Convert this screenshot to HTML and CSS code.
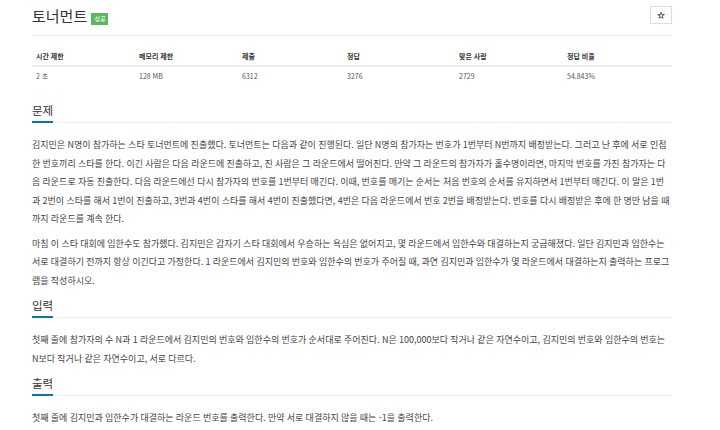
FILE: index.html
```html
<!DOCTYPE html>
<html lang="ko">
<head>
    <meta charset="UTF-8">
    <meta name="viewport" content="width=device-width, initial-scale=1.0">
    <title>토너먼트</title>
    <link rel="stylesheet" href="styles.css">
</head>
<body>
    <div class="page">
        <div class="page-header">
            <h1 class="title">토너먼트 <span class="badge">성공</span></h1>
            <button class="star-btn">&#9734;</button>
        </div>

        <table class="info">
            <thead>
                <tr>
                    <th class="c1">시간 제한</th>
                    <th class="c2">메모리 제한</th>
                    <th class="c3">제출</th>
                    <th class="c4">정답</th>
                    <th class="c5">맞은 사람</th>
                    <th>정답 비율</th>
                </tr>
            </thead>
            <tbody>
                <tr>
                    <td>2 초</td>
                    <td>128 MB</td>
                    <td>6312</td>
                    <td>3276</td>
                    <td>2729</td>
                    <td>54.843%</td>
                </tr>
            </tbody>
        </table>

        <section class="sec">
            <div class="headline"><h2>문제</h2></div>
            <p>김지민은 N명이 참가하는 스타 토너먼트에 진출했다. 토너먼트는 다음과 같이 진행된다. 일단 N명의 참가자는 번호가 1번부터 N번까지 배정받는다. 그러고 난 후에 서로 인접한 번호끼리 스타를 한다. 이긴 사람은 다음 라운드에 진출하고, 진 사람은 그 라운드에서 떨어진다. 만약 그 라운드의 참가자가 홀수명이라면, 마지막 번호를 가진 참가자는 다음 라운드로 자동 진출한다. 다음 라운드에선 다시 참가자의 번호를 1번부터 매긴다. 이때, 번호를 매기는 순서는 처음 번호의 순서를 유지하면서 1번부터 매긴다. 이 말은 1번과 2번이 스타를 해서 1번이 진출하고, 3번과 4번이 스타를 해서 4번이 진출했다면, 4번은 다음 라운드에서 번호 2번을 배정받는다. 번호를 다시 배정받은 후에 한 명만 남을 때까지 라운드를 계속 한다.</p>
            <p>마침 이 스타 대회에 임한수도 참가했다. 김지민은 갑자기 스타 대회에서 우승하는 욕심은 없어지고, 몇 라운드에서 임한수와 대결하는지 궁금해졌다. 일단 김지민과 임한수는 서로 대결하기 전까지 항상 이긴다고 가정한다. 1 라운드에서 김지민의 번호와 임한수의 번호가 주어질 때, 과연 김지민과 임한수가 몇 라운드에서 대결하는지 출력하는 프로그램을 작성하시오.</p>
        </section>

        <section class="sec">
            <div class="headline"><h2>입력</h2></div>
            <p>첫째 줄에 참가자의 수 N과 1 라운드에서 김지민의 번호와 임한수의 번호가 순서대로 주어진다. N은 100,000보다 작거나 같은 자연수이고, 김지민의 번호와 임한수의 번호는 N보다 작거나 같은 자연수이고, 서로 다르다.</p>
        </section>

        <section class="sec">
            <div class="headline"><h2>출력</h2></div>
            <p>첫째 줄에 김지민과 임한수가 대결하는 라운드 번호를 출력한다. 만약 서로 대결하지 않을 때는 -1을 출력한다.</p>
        </section>
    </div>
</body>
</html>
```

FILE: styles.css
```css
*{
    padding: 0;
    margin: 0;
    box-sizing: border-box;
}
body{
    background-color: white;
    font-family: "Noto Sans CJK KR", "Noto Sans", sans-serif;
    color: #333;
}
.page{
    width: 640px;
    margin-left: 32px;
}
.page-header{
    display: flex;
    justify-content: space-between;
    align-items: flex-start;
    padding-top: 5px;
    padding-bottom: 9px;
    border-bottom: 1px solid #eee;
}
.title{
    font-size: 15px;
    font-weight: 400;
    line-height: 21px;
    color: #333;
}
.badge{
    display: inline-block;
    background-color: #5cb85c;
    color: white;
    font-size: 6px;
    line-height: 12px;
    padding: 0 3px;
    vertical-align: 1px;
}
.star-btn{
    width: 22px;
    height: 18px;
    margin-top: 1px;
    background: white;
    border: 1px solid #ddd;
    font-size: 8px;
    font-weight: 700;
    color: #222;
}
.info{
    width: 100%;
    margin-top: 12px;
    margin-bottom: 11px;
    border-collapse: collapse;
    font-size: 7px;
    line-height: 10px;
    text-align: left;
}
.info th{
    font-weight: 700;
    padding: 3px 4px 4px;
    border-bottom: 2px solid #eee;
}
.info .c1, .info .c2{ width: 103px; }
.info .c3{ width: 105px; }
.info .c4{ width: 112px; }
.info .c5{ width: 108px; }
.info td{
    padding: 4px 4px;
    color: #555;
}
.headline{
    border-bottom: 1px solid #eee;
    margin-bottom: 13px;
}
.headline h2{
    display: inline-block;
    font-size: 11.5px;
    font-weight: 400;
    line-height: 22px;
    color: #333;
    border-bottom: 2px solid #0076c0;
    margin-bottom: -1px;
}
.sec p{
    font-size: 9px;
    line-height: 18.5px;
    word-spacing: -0.25px;
    color: #444;
    margin-bottom: 6px;
}
.sec p:last-child{
    margin-bottom: 1px;
}
```
